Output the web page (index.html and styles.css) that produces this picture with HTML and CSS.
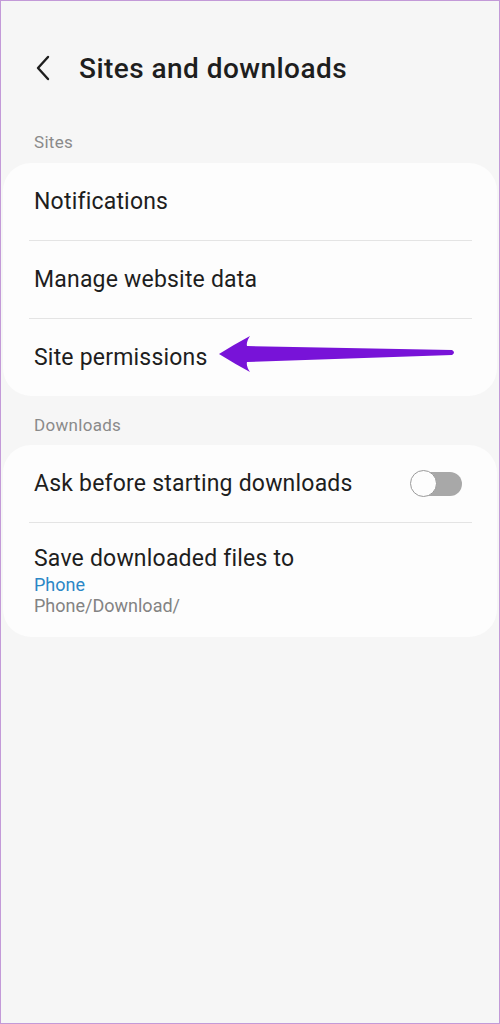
FILE: index.html
```html
<!DOCTYPE html>
<html>
<head>
<meta charset="utf-8">
<link rel="stylesheet" href="styles.css">
</head>
<body>
<div class="frame">
  <header class="topbar">
    <svg class="back" width="20" height="28" viewBox="0 0 20 28"><polyline points="15,3 5,14 15,25" fill="none" stroke="#1e1e1e" stroke-width="2.4" stroke-linecap="round" stroke-linejoin="round"/></svg>
    <h1 class="title">Sites and downloads</h1>
  </header>

  <div class="section-label first">Sites</div>
  <div class="card">
    <div class="row">Notifications</div>
    <div class="divider"></div>
    <div class="row">Manage website data</div>
    <div class="divider"></div>
    <div class="row">Site permissions</div>
  </div>

  <div class="section-label second">Downloads</div>
  <div class="card">
    <div class="row toggle-row">
      <span>Ask before starting downloads</span>
      <span class="switch"><span class="knob"></span></span>
    </div>
    <div class="divider"></div>
    <div class="row multi">
      <div class="main">Save downloaded files to</div>
      <div class="accent">Phone</div>
      <div class="sub">Phone/Download/</div>
    </div>
  </div>

  <svg class="arrow" width="500" height="1024" viewBox="0 0 500 1024">
    <path d="M219,354 Q235,344 250,336 Q246,342 247,346 L452,350 Q456,352.5 452,355 L247,362 Q246,366 250,372 Q235,364 219,354 Z" fill="#7813d8"/>
  </svg>
</div>
</body>
</html>
```

FILE: styles.css
```css
html, body {
  margin: 0;
  padding: 0;
}
body {
  font-family: Roboto, "Noto Sans", "Liberation Sans", sans-serif;
  color: #1e1e1e;
}
.frame {
  position: relative;
  width: 500px;
  height: 1024px;
  box-sizing: border-box;
  border: 1px solid #c39ad8;
  background: #f6f6f6;
  overflow: hidden;
}
.topbar {
  display: flex;
  align-items: center;
  height: 48px;
  padding: 43px 0 0 32px;
}
.back {
  display: block;
  margin-right: 26px;
}
.title {
  margin: 0;
  font-size: 28px;
  font-weight: 500;
  color: #1e1e1e;
  letter-spacing: 0.45px;
}
.section-label {
  font-size: 17px;
  line-height: 20px;
  color: #8a8a8a;
  padding: 0 33px;
  letter-spacing: 0.3px;
}
.section-label.first {
  padding-top: 40px;
  padding-bottom: 11px;
}
.section-label.second {
  padding-top: 19px;
  padding-bottom: 10px;
}
.card {
  margin: 0 2px;
  background: #fdfdfd;
  border-radius: 28px;
}
.row {
  height: 77px;
  display: flex;
  align-items: center;
  padding: 0 32px 0 31px;
  font-size: 23px;
  letter-spacing: 0.2px;
  color: #1e1e1e;
}
.divider {
  height: 1px;
  margin: 0 25px 0 26px;
  background: #e4e4e4;
}
.toggle-row {
  justify-content: space-between;
  padding-right: 35px;
}
.switch {
  position: relative;
  width: 51px;
  height: 24px;
  border-radius: 12px;
  background: #a8a8a8;
}
.knob {
  position: absolute;
  left: -1px;
  top: -2px;
  width: 25px;
  height: 25px;
  border-radius: 50%;
  background: #fdfdfd;
  border: 1.5px solid #9a9a9a;
}
.row.multi {
  height: auto;
  display: block;
  padding-top: 21px;
  padding-bottom: 21px;
}
.main {
  line-height: 30px;
  margin-bottom: 0;
}
.accent {
  font-size: 18px;
  line-height: 21px;
  color: #2b87c6;
  letter-spacing: 0;
}
.sub {
  font-size: 18px;
  line-height: 21px;
  color: #838383;
  letter-spacing: 0;
}
.arrow {
  position: absolute;
  top: -1px;
  left: -1px;
  pointer-events: none;
}
```
